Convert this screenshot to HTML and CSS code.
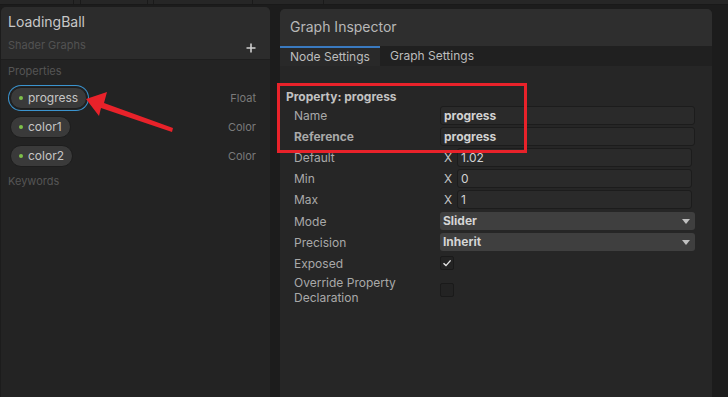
FILE: index.html
```html
<!DOCTYPE html>
<html lang="en">
<head>
    <meta charset="UTF-8">
    <meta name="viewport" content="width=device-width, initial-scale=1.0">
    <title>Shader Graph - LoadingBall</title>
    <link rel="stylesheet" href="styles.css">
</head>
<body>
    <div class="topbar">
        <div class="top-tab" style="width:73px"></div>
        <div class="top-tab" style="width:6px"></div>
        <div class="top-tab" style="width:66px"></div>
        <div class="top-tab" style="width:5px"></div>
        <div class="top-tab" style="width:98px"></div>
        <div class="top-tab" style="width:70px"></div>
    </div>

    <div class="main">
        <!-- Blackboard -->
        <div class="blackboard">
            <div class="bb-header">
                <div>
                    <div class="bb-title">LoadingBall</div>
                    <div class="bb-subtitle">Shader Graphs</div>
                </div>
                <svg class="bb-add" width="10" height="10" viewBox="0 0 10 10">
                    <path d="M5 0.5 V9.5 M0.5 5 H9.5" stroke="#cfcfcf" stroke-width="1.6"/>
                </svg>
            </div>
            <div class="bb-body">
                <div class="section-label">Properties</div>
                <div class="prop-row">
                    <span class="pill selected"><span class="dot"></span>progress</span>
                    <span class="prop-type">Float</span>
                </div>
                <div class="prop-row">
                    <span class="pill"><span class="dot"></span>color1</span>
                    <span class="prop-type">Color</span>
                </div>
                <div class="prop-row">
                    <span class="pill"><span class="dot"></span>color2</span>
                    <span class="prop-type">Color</span>
                </div>
                <div class="section-label keywords">Keywords</div>
            </div>
        </div>

        <!-- Graph Inspector -->
        <div class="inspector">
            <div class="insp-header">Graph Inspector</div>
            <div class="tabs">
                <div class="tab active">Node Settings</div>
                <div class="tab">Graph Settings</div>
            </div>
            <div class="insp-body">
                <div class="prop-title">Property: progress</div>
                <div class="field-row">
                    <span class="label">Name</span>
                    <span class="text-field bold">progress</span>
                </div>
                <div class="field-row">
                    <span class="label bold">Reference</span>
                    <span class="text-field bold">progress</span>
                </div>
                <div class="field-row">
                    <span class="label">Default</span>
                    <span class="axis">X</span>
                    <span class="text-field num">1.02</span>
                </div>
                <div class="field-row">
                    <span class="label">Min</span>
                    <span class="axis">X</span>
                    <span class="text-field num">0</span>
                </div>
                <div class="field-row">
                    <span class="label">Max</span>
                    <span class="axis">X</span>
                    <span class="text-field num">1</span>
                </div>
                <div class="field-row">
                    <span class="label">Mode</span>
                    <span class="dropdown">Slider<span class="caret"></span></span>
                </div>
                <div class="field-row">
                    <span class="label">Precision</span>
                    <span class="dropdown">Inherit<span class="caret"></span></span>
                </div>
                <div class="field-row">
                    <span class="label">Exposed</span>
                    <span class="checkbox">
                        <svg width="10" height="10" viewBox="0 0 10 10"><path d="M1.5 5.2 L4 7.6 L8.6 2.4" fill="none" stroke="#e6e6e6" stroke-width="1.4"/></svg>
                    </span>
                </div>
                <div class="field-row tall">
                    <span class="label two-line">Override Property<br>Declaration</span>
                    <span class="checkbox"></span>
                </div>
            </div>
        </div>

        <!-- annotations -->
        <div class="highlight-box"></div>
        <svg class="arrow" width="100" height="50" viewBox="80 90 100 50">
            <polygon points="86,99 107,92 104,103 173,128 172,132 101,108 99,116" fill="#e8222a"/>
        </svg>
    </div>
</body>
</html>
```

FILE: styles.css
```css
body {
    margin: 0;
    padding: 0;
    background-color: #1c1c1c;
    font-family: Inter, "Noto Sans", sans-serif;
    color: #c4c4c4;
    overflow: hidden;
}
.topbar {
    display: flex;
    height: 4px;
    background-color: #262626;
    border-bottom: 1px solid #191919;
}
.top-tab {
    height: 4px;
    border-right: 1px solid #1a1a1a;
}
.main {
    position: relative;
    display: flex;
    height: 392px;
}

/* blackboard */
.blackboard {
    width: 269px;
    margin: 2px 0 0 1px;
    background-color: #232323;
    border-radius: 5px 5px 0 0;
    overflow: hidden;
}
.bb-header {
    display: flex;
    justify-content: space-between;
    align-items: flex-start;
    padding: 6px 14px 0 7px;
    box-sizing: border-box;
    height: 53px;
    background-color: #2c2c2c;
    border-bottom: 1px solid #1e1e1e;
}
.bb-title {
    font-size: 14px;
    line-height: 18px;
    color: #c8c8c8;
}
.bb-subtitle {
    margin-top: 7px;
    font-size: 11px;
    line-height: 14px;
    color: #525252;
}
.bb-add {
    margin-top: 30px;
}
.bb-body {
    padding: 4px 14px 0 7px;
}
.section-label {
    font-size: 11px;
    line-height: 14px;
    color: #555555;
    margin-bottom: 5px;
}
.section-label.keywords {
    margin-top: 4px;
}
.prop-row {
    display: flex;
    justify-content: space-between;
    align-items: center;
    height: 29px;
}
.pill {
    display: flex;
    align-items: center;
    height: 20px;
    margin-left: 2px;
    padding: 0 8px 0 8px;
    background-color: #3a3a3a;
    border: 1px solid #1d1d1d;
    border-radius: 11px;
    font-size: 12px;
    color: #c6c6c6;
}
.pill.selected {
    box-shadow: 0 0 0 1px #232323, 0 0 0 2px #3b94cf;
}
.dot {
    width: 4px;
    height: 4px;
    border-radius: 50%;
    background-color: #7ec04a;
    margin-right: 5px;
}
.prop-type {
    font-size: 11px;
    color: #7a7a7a;
}

/* inspector */
.inspector {
    width: 432px;
    margin: 4px 0 0 10px;
    background-color: #262626;
    border-radius: 5px 5px 0 0;
    overflow: hidden;
}
.insp-header {
    height: 37px;
    line-height: 36px;
    padding-left: 10px;
    font-size: 14px;
    color: #b8b8b8;
    background-color: #2e2e2e;
}
.tabs {
    display: flex;
    height: 20px;
    background-color: #202020;
}
.tab {
    padding: 0 10px;
    font-size: 12px;
    line-height: 20px;
    white-space: nowrap;
    color: #bdbdbd;
}
.tab.active {
    width: 100px;
    box-sizing: border-box;
    background-color: #292929;
    border-top: 2px solid #3a7ac0;
    line-height: 18px;
}
.insp-body {
    padding: 23px 17px 0 6px;
}
.prop-title {
    font-size: 12px;
    line-height: 16px;
    font-weight: bold;
    color: #c2c2c2;
}
.field-row {
    display: flex;
    align-items: center;
    height: 21.1px;
    padding-left: 8px;
}
.field-row.tall {
    height: 32px;
}
.label {
    width: 146px;
    flex-shrink: 0;
    font-size: 12px;
    color: #a9a9a9;
}
.label.bold, .bold {
    font-weight: bold;
}
.label.two-line {
    line-height: 15px;
}
.text-field {
    flex: 1;
    height: 17px;
    line-height: 17px;
    padding-left: 3px;
    background-color: #2a2a2a;
    border: 1px solid #1c1c1c;
    border-radius: 3px;
    font-size: 12px;
    color: #d2d2d2;
}
.text-field.num {
    margin-right: 3px;
}
.axis {
    width: 17px;
    padding-left: 4px;
    box-sizing: border-box;
    font-size: 12px;
    color: #c4c4c4;
}
.dropdown {
    position: relative;
    flex: 1;
    height: 18px;
    line-height: 18px;
    padding-left: 3px;
    background-color: #3f3f3f;
    border-radius: 3px;
    font-size: 12px;
    font-weight: bold;
    color: #d4d4d4;
}
.caret {
    position: absolute;
    right: 5px;
    top: 7px;
    border-left: 4px solid transparent;
    border-right: 4px solid transparent;
    border-top: 5px solid #c0c0c0;
}
.checkbox {
    display: flex;
    align-items: center;
    justify-content: center;
    width: 12px;
    height: 12px;
    background-color: #232323;
    border: 1px solid #1a1a1a;
    border-radius: 2px;
}

/* annotations */
.highlight-box {
    position: absolute;
    left: 277px;
    top: 78px;
    width: 244px;
    height: 64px;
    border: 3px solid #e8222a;
}
.arrow {
    position: absolute;
    left: 80px;
    top: 85px;
}
```
